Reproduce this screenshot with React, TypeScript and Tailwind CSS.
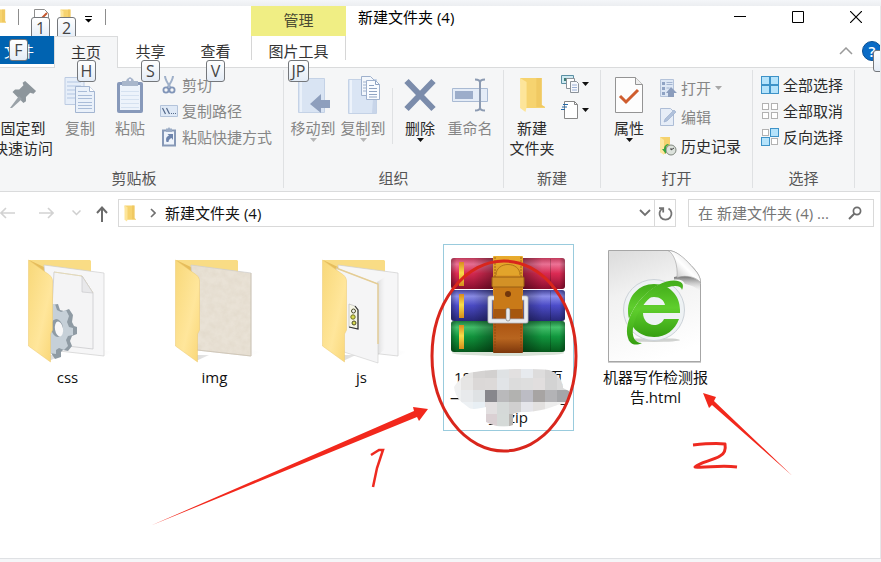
import type { ReactNode } from "react";

const FONT = "font-['Open_Sans','Noto_Sans_CJK_SC',sans-serif]";

function KeyTip({ children, className }: { children: ReactNode; className: string }) {
  return (
    <span
      className={`absolute z-10 flex h-[22px] items-center justify-center rounded-[3px] border border-[#74777b] bg-linear-to-b from-white to-[#e4ecf6] text-[16px] leading-5 text-[#444] ${className}`}
    >
      {children}
    </span>
  );
}

function Caret({ color = "#111" }: { color?: string }) {
  return (
    <svg width="7" height="4" viewBox="0 0 7 4">
      <path d="M0 0h7L3.500 4z" fill={color} />
    </svg>
  );
}

/* ---------- small drawings ---------- */

function MiniFolder({ w = 14, h = 18 }: { w?: number; h?: number }) {
  return (
    <svg width={w} height={h} viewBox="0 0 24 36" preserveAspectRatio="none">
      <path d="M1 1h20v27l3 2v1H5z" fill="#f6d36f" />
      <path d="M16 1h5v27l3 2h-8z" fill="#edc35a" opacity=".6" />
      <path d="M1 1l6 4v25l-1 5-5-4z" fill="#fde59a" />
    </svg>
  );
}

function PinIcon() {
  return (
    <svg width="36" height="36" viewBox="0 0 36 36">
      <path d="M18 6l13 12-3 3-4-1-5 5 0 5-3 2-13-13 3-3 5 0 5-5-1-3z" transform="translate(5 -1) scale(.84)" fill="#8d969c" />
      <path d="M14 19l3 3L7 31l-2 0z" fill="#9aa2a8" />
    </svg>
  );
}

function CopyIcon() {
  return (
    <svg width="32" height="36" viewBox="0 0 32 36">
      <path d="M1 .5h19v27H1z" fill="#e6eef9" stroke="#bccbe2" />
      <path d="M3 5h14M3 9h14M3 13h8M3 17h8M3 21h8" stroke="#b3c6e2" />
      <path d="M11.500 9.500h14l5 5v21h-19z" fill="#eaf1fa" stroke="#a3b5d1" />
      <path d="M25.500 9.500v5h5" fill="#fff" stroke="#a3b5d1" />
      <path d="M14 14.500h9M14 18.500h14M14 21.500h14M14 25.500h14M14 28.500h14M14 31.500h14" stroke="#a9bcd8" />
    </svg>
  );
}

function PasteIcon() {
  return (
    <svg width="28" height="37" viewBox="0 0 28 37">
      <rect x="1" y="5" width="26" height="31" rx="2" fill="#8799ba" />
      <path d="M4 8h20v25H4z" fill="#edf3fb" />
      <path d="M5 14.500h18M5 18.500h18M5 22.500h18M5 26.500h18M5 30.500h18" stroke="#d5e1f0" />
      <path d="M6 4h4l1-2 3-2 3 2 1 2h4v5H6z" fill="#a8b6cb" />
      <path d="M13 2h2v2h-2z" fill="#eef" />
    </svg>
  );
}

function MoveIcon() {
  return (
    <svg width="36" height="36" viewBox="0 0 36 36">
      <path d="M3.500 1.500h26v34h-26z" fill="#d9e4f3" stroke="#c4d2e6" />
      <path d="M6 2v33" stroke="#eaf1fa" strokeWidth="2" />
      <path d="M15 27l11-10v6h9v8h-9v5z" fill="#8e9fbd" />
    </svg>
  );
}

function CopyToIcon() {
  return (
    <svg width="36" height="38" viewBox="0 0 36 38">
      <path d="M3.500 3.500h28v34h-28z" fill="#dae5f4" stroke="#c4d2e6" />
      <path d="M6 4v33" stroke="#edf3fb" strokeWidth="2" />
      <path d="M28 23h3v14h-4z" fill="#c8d5e9" />
      <path d="M16.500.5h9l4 4v15h-13z" fill="#f3f7fc" stroke="#9fb1cd" />
      <path d="M18 6h5M18 9h4M18 12h4M18 15h4" stroke="#9fb1cd" />
      <path d="M21.500 4.500h9l4 4v15h-13z" fill="#fafcff" stroke="#9fb1cd" />
      <path d="M30.500 4.500v4h4M24 9.500h5M24 12.500h8M24 15.500h8M24 18.500h8M24 21h8" stroke="#8fa3c2" fill="none" />
    </svg>
  );
}

function DeleteIcon() {
  return (
    <svg width="36" height="36" viewBox="0 0 36 36">
      <path d="M4.500 4l27 28M31.500 4l-27 28" stroke="#7b8cab" strokeWidth="6" />
    </svg>
  );
}

function RenameIcon() {
  return (
    <svg width="36" height="36" viewBox="0 0 36 36">
      <path d="M.5 11.500h35v13H.5z" fill="#e4ecf7" stroke="#a9bad3" />
      <path d="M3 14h18v8H3z" fill="#9cadca" />
      <path d="M23 2.500c3 0 5 1 5 3 0-2 2-3 5-3M28 5v26M23 33.500c3 0 5-1 5-3 0 2 2 3 5 3" fill="none" stroke="#8c9bb2" strokeWidth="2" />
    </svg>
  );
}

function PropertiesIcon() {
  return (
    <svg width="30" height="37" viewBox="0 0 30 37">
      <path d="M1.500.5h20l7 7v28h-27z" fill="#fdfdfd" stroke="#949494" />
      <path d="M21.500.5v7h7" fill="#eee" stroke="#949494" />
      <path d="M6 19l6 6L24 13" fill="none" stroke="#cf5d2e" strokeWidth="3" />
    </svg>
  );
}

function ScissorsIcon() {
  return (
    <svg width="18" height="20" viewBox="0 0 18 20">
      <path d="M5 1c0 4 3 8 6 12M13 1c0 4-3 8-6 12" fill="none" stroke="#9fb0c9" strokeWidth="2" />
      <circle cx="6" cy="15" r="2.600" fill="none" stroke="#8195b8" strokeWidth="1.800" />
      <circle cx="12" cy="15" r="2.600" fill="none" stroke="#8195b8" strokeWidth="1.800" />
    </svg>
  );
}

function PathIcon() {
  return (
    <svg width="18" height="20" viewBox="0 0 18 20">
      <path d="M.5 4.500h17v11H.5z" fill="#dfe9f6" stroke="#b3c3da" />
      <path d="M2.500 7l3 6M6.500 7l3 6" stroke="#566b8c" strokeWidth="1.200" />
      <path d="M11 12.500h1M13 12.500h1M15 12.500h1" stroke="#566b8c" />
    </svg>
  );
}

function ShortcutIcon() {
  return (
    <svg width="18" height="20" viewBox="0 0 18 20">
      <path d="M3 3.500h12v15H3z" fill="#eff4fb" stroke="#8799b7" strokeWidth="2" />
      <path d="M6 1.500h2L9 0l1 1.500h2V5H6z" fill="#9aabc5" />
      <path d="M6.500 15c-1-4 0-5.500 2.500-6.500L7.500 7H13v6l-1.500-2c-2 1-3 2-3 4z" fill="#6d84ac" />
    </svg>
  );
}

function OpenIcon() {
  return (
    <svg width="18" height="20" viewBox="0 0 18 20">
      <path d="M1.500 1.500h13v17h-13z" fill="#dde7f5" stroke="#b4c3da" />
      <path d="M3 4h3v3H3zM3 9h3v3H3zM3 14h3v3H3z" fill="#8fa3c4" />
      <path d="M7.500 4.500h6M7.500 6.500h6M7.500 10h3" stroke="#a3b4d0" />
      <path d="M12 9l6 6h-3v4H9v-4H7z" fill="#8b9dbd" />
    </svg>
  );
}

function EditIcon() {
  return (
    <svg width="18" height="20" viewBox="0 0 18 20">
      <path d="M1.500 1.500h10l3 3v14h-13z" fill="#e6edf7" stroke="#adbdd6" />
      <path d="M5 15l1-3L15 3l2 2-9 9z" fill="#b0c1db" stroke="#95a9c9" strokeWidth=".6" />
    </svg>
  );
}

function HistoryIcon() {
  return (
    <svg width="18" height="20" viewBox="0 0 18 20">
      <path d="M1 1h10v15l-6 2-4-2z" fill="#f5d26e" />
      <path d="M1 1l4 3v15l-4-3z" fill="#fde79f" />
      <circle cx="12" cy="14" r="5" fill="#dce2dc" stroke="#80877f" />
      <path d="M12 14l3-2M12 14v-2" stroke="#444" />
      <path d="M10 8c-3 0-5 2-5 5H3l4 5V11c1-1 2-2 3-3z" fill="#39a443" />
    </svg>
  );
}

function SelectIcon({ kind }: { kind: "all" | "none" | "invert" }) {
  const squares = [
    [kind === "all", 0, 0],
    [kind !== "none", 9, 0],
    [kind !== "none", 0, 9],
    [kind === "all", 9, 9],
  ] as const;
  return (
    <svg width="18" height="20" viewBox="0 -1 18 20">
      {squares.map(([active, x, y], i) =>
        active ? (
          <rect key={i} x={x + 0.5} y={y + 0.5} width="8" height="8" fill="#b5e3fb" stroke="#3e93c8" />
        ) : (
          <rect key={i} x={x + 1.5} y={y + 1.5} width="6" height="6" fill="#fff" stroke="#b2b2b2" />
        ),
      )}
    </svg>
  );
}

function NewItemIcon() {
  return (
    <svg width="19" height="20" viewBox="0 0 19 20">
      <path d="M.5 1.500h12v8H.5z" fill="#cfeaf2" stroke="#5a8fa3" />
      <path d="M3 4h4v3H3z" fill="#3d7c74" />
      <path d="M5.500 4.500h8v10h-8z" fill="#fff" stroke="#8b9299" />
      <path d="M9.500 7.500h6l2 2v9h-8z" fill="#f7f9fd" stroke="#8b9299" />
      <path d="M11 11h5M11 13.500h5M11 16h5" stroke="#9ab0d6" />
    </svg>
  );
}

function EasyAccessIcon() {
  return (
    <svg width="19" height="20" viewBox="0 0 19 20">
      <path d="M3.500 1.500h10l3 3v14h-13z" fill="#fff" stroke="#868686" />
      <path d="M13.500 1.500v3h3" fill="none" stroke="#868686" />
      <path d="M2 4.500h5M1 7h5M0 9.500h4" stroke="#2569a8" />
    </svg>
  );
}

/* ---------- ribbon ---------- */

function Group({
  label,
  className,
  inset = "pl-1",
  children,
}: {
  label: string;
  className: string;
  inset?: string;
  children: ReactNode;
}) {
  return (
    <section
      aria-label={label}
      className={`relative flex h-[118px] shrink-0 flex-col justify-between border-r border-[#dfe1e3] ${className}`}
    >
      <div className={`flex items-start ${inset}`}>{children}</div>
      <div className="text-center leading-5 text-[#555]">{label}</div>
    </section>
  );
}

function BigButton({
  icon,
  lines,
  className = "w-[50px]",
  muted,
  caret,
}: {
  icon: ReactNode;
  lines: string[];
  className?: string;
  muted?: boolean;
  caret?: boolean;
}) {
  return (
    <button type="button" className={`flex shrink-0 flex-col items-center ${muted ? "text-[#868686]" : "text-[#2b2b2b]"} ${className}`}>
      <span className="flex h-12 items-center justify-center pt-0.5">{icon}</span>
      {lines.map((line) => (
        <span key={line} className="leading-5 whitespace-nowrap">
          {line}
        </span>
      ))}
      {caret && <Caret color={muted ? "#b5b5b5" : "#111"} />}
    </button>
  );
}

function SmallButton({ icon, label, muted, caret }: { icon: ReactNode; label: string; muted?: boolean; caret?: boolean }) {
  return (
    <button type="button" className={`flex items-center gap-1 leading-5 whitespace-nowrap ${muted ? "text-[#868686]" : "text-[#2b2b2b]"}`}>
      {icon}
      <span>{label}</span>
      {caret && <Caret color="#a8a8a8" />}
    </button>
  );
}

function Ribbon() {
  return (
    <div className="flex h-[125px] overflow-hidden border-y border-[#dadbdc] bg-[#f5f6f7] pt-0.5">
      <Group label="剪贴板" className="-ml-[15px] w-[299px]" inset="pl-2">
        <BigButton icon={<PinIcon />} lines={["固定到", "快速访问"]} className="w-[60px]" />
        <div className="w-0.5" />
        <BigButton icon={<CopyIcon />} lines={["复制"]} muted />
        <BigButton icon={<PasteIcon />} lines={["粘贴"]} muted />
        <div className="flex flex-col gap-1.5 pt-[5px] pl-[5px]">
          <SmallButton icon={<ScissorsIcon />} label="剪切" muted />
          <SmallButton icon={<PathIcon />} label="复制路径" muted />
          <SmallButton icon={<ShortcutIcon />} label="粘贴快捷方式" muted />
        </div>
      </Group>
      <Group label="组织" className="w-[220px]">
        <BigButton icon={<MoveIcon />} lines={["移动到"]} muted caret />
        <BigButton icon={<CopyToIcon />} lines={["复制到"]} muted caret />
        <div className="mt-[18px] mr-0.5 ml-1 h-14 w-px bg-[#dfe1e3]" />
        <BigButton icon={<DeleteIcon />} lines={["删除"]} caret />
        <BigButton icon={<RenameIcon />} lines={["重命名"]} muted />
      </Group>
      <Group label="新建" className="w-[97px]" inset="pl-[3px]">
        <BigButton icon={<MiniFolder w={26} h={36} />} lines={["新建", "文件夹"]} />
        <div className="flex flex-col gap-1.5 pt-1 pl-1">
          <button type="button" aria-label="新建项目" className="flex items-center gap-0.5">
            <NewItemIcon />
            <Caret />
          </button>
          <button type="button" aria-label="轻松访问" className="flex items-center gap-0.5">
            <EasyAccessIcon />
            <Caret />
          </button>
        </div>
      </Group>
      <Group label="打开" className="w-[152px]" inset="pl-[3px]">
        <BigButton icon={<PropertiesIcon />} lines={["属性"]} caret />
        <div className="flex flex-col gap-[9px] pt-2 pl-[5px]">
          <SmallButton icon={<OpenIcon />} label="打开" muted caret />
          <SmallButton icon={<EditIcon />} label="编辑" muted />
          <SmallButton icon={<HistoryIcon />} label="历史记录" />
        </div>
      </Group>
      <Group label="选择" className="w-[102px]" inset="pl-2">
        <div className="flex flex-col gap-1.5 pt-[5px]">
          <SmallButton icon={<SelectIcon kind="all" />} label="全部选择" />
          <SmallButton icon={<SelectIcon kind="none" />} label="全部取消" />
          <SmallButton icon={<SelectIcon kind="invert" />} label="反向选择" />
        </div>
      </Group>
    </div>
  );
}

/* ---------- header ---------- */

function TitleBar() {
  return (
    <header className="flex h-[30px] items-start bg-white text-black">
      <div className="flex h-[30px] w-[251px] shrink-0 items-start pt-[3px]">
        <div className="-ml-2 w-[14px] overflow-hidden">
          <MiniFolder w={15} h={16} />
        </div>
        <div className="ml-3 h-4 w-px bg-[#8d8d8d]" />
        <button type="button" aria-label="属性" className="relative ml-[15px] h-4 w-[15px]">
          <svg width="15" height="16" viewBox="0 0 15 16">
            <path d="M.5.5h10l4 4v11H.5z" fill="#fff" stroke="#8f8f8f" />
            <path d="M8 9l5-5" stroke="#c4572d" strokeWidth="2" />
          </svg>
          <KeyTip className="top-2 -left-[3px] w-[19px]">1</KeyTip>
        </button>
        <button type="button" aria-label="新建文件夹" className="relative ml-[11px] h-4 w-3">
          <MiniFolder w={12} h={16} />
          <KeyTip className="top-2 -left-[3px] w-[19px]">2</KeyTip>
        </button>
        <button type="button" aria-label="自定义快速访问工具栏" className="mt-[7px] ml-[13px]">
          <svg width="7" height="7" viewBox="0 0 7 7">
            <path d="M0 0h7v1H0zM0 3h7L3.500 6.500z" fill="#000" />
          </svg>
        </button>
        <div className="ml-[13px] h-4 w-px bg-[#8d8d8d]" />
      </div>
      <div className="h-[30px] w-[95px] shrink-0 bg-[#f0ee84] text-center leading-[29px] text-[#4a4a32]">管理</div>
      <h1 className="ml-3 flex-1 leading-[22px]">新建文件夹 (4)</h1>
      <div className="flex shrink-0 items-center gap-[46px] pt-[5px] pr-[18px]">
        <button type="button" aria-label="最小化">
          <svg width="12" height="12" viewBox="0 0 12 12">
            <path d="M0 5.500h12" stroke="#000" />
          </svg>
        </button>
        <button type="button" aria-label="最大化">
          <svg width="12" height="12" viewBox="0 0 12 12">
            <path d="M.5.5h11v11H.5z" fill="none" stroke="#000" />
          </svg>
        </button>
        <button type="button" aria-label="关闭">
          <svg width="12" height="12" viewBox="0 0 12 12">
            <path d="M0 0l12 12M12 0L0 12" stroke="#000" strokeWidth="1.200" />
          </svg>
        </button>
      </div>
    </header>
  );
}

function Tabs() {
  return (
    <nav className="relative z-10 -mb-px flex h-8 items-start text-[#333]">
      <button type="button" className="relative h-7 w-[54px] bg-[#0063b1] pl-1 text-left leading-[30px] text-white">
        文件
        <KeyTip className="top-[3px] left-[9px] w-[19px]">F</KeyTip>
      </button>
      <button type="button" className="relative h-8 w-16 border-x border-t border-[#dadbdc] bg-[#f5f6f7] leading-7">
        <span className="block h-[30px]">主页</span>
        <KeyTip className="top-[23px] left-[22px] w-[19px]">H</KeyTip>
      </button>
      <button type="button" className="relative h-7 w-[65px] leading-[30px]">
        共享
        <KeyTip className="top-6 left-[23px] w-[19px]">S</KeyTip>
      </button>
      <button type="button" className="relative h-7 w-[65px] leading-[30px]">
        查看
        <KeyTip className="top-6 left-[23px] w-[19px]">V</KeyTip>
      </button>
      <button type="button" className="relative ml-[3px] h-6 w-[95px] border-x border-[#d6d6d6] leading-[30px]">
        图片工具
        <KeyTip className="top-6 left-9 w-[21px]">JP</KeyTip>
      </button>
      <div className="flex flex-1 justify-end overflow-x-clip pt-[5px]">
        <button type="button" aria-label="最小化功能区" className="mt-1.5 mr-[9px] h-2">
          <svg width="14" height="8" viewBox="0 0 14 8">
            <path d="M1 7l6-6 6 6" fill="none" stroke="#9a9a9a" strokeWidth="1.500" />
          </svg>
        </button>
        <button
          type="button"
          className="relative -mr-0.5 h-5 w-5 rounded-full border border-[#0a4f93] bg-[#0a6bc6] text-center leading-[18px] font-semibold text-white"
        >
          ?
          <KeyTip className="top-2 left-[10px] w-[19px]">{""}</KeyTip>
        </button>
      </div>
    </nav>
  );
}

function AddressBar() {
  return (
    <div className="flex h-[28px] items-stretch pr-[6px]">
      <div className="flex w-[118px] shrink-0 items-center">
        <button type="button" aria-label="后退">
          <svg width="15" height="12" viewBox="0 0 15 12">
            <path d="M1 6h14M6 1L1 6l5 5" fill="none" stroke="#d2d2d2" strokeWidth="1.600" />
          </svg>
        </button>
        <button type="button" aria-label="前进" className="ml-6">
          <svg width="15" height="12" viewBox="0 0 15 12">
            <path d="M0 6h14M9 1l5 5-5 5" fill="none" stroke="#d2d2d2" strokeWidth="1.600" />
          </svg>
        </button>
        <button type="button" aria-label="最近浏览的位置" className="ml-[18px]">
          <svg width="9" height="6" viewBox="0 0 9 6">
            <path d="M.5.5l4 4 4-4" fill="none" stroke="#cfcfcf" strokeWidth="1.500" />
          </svg>
        </button>
        <button type="button" aria-label="上移" className="ml-[15px] pt-0.5">
          <svg width="12" height="16" viewBox="0 0 12 16">
            <path d="M6 16V1.500M1 7l5-5.500L11 7" fill="none" stroke="#6b6b6b" strokeWidth="2" />
          </svg>
        </button>
      </div>
      <div className="flex flex-1 items-center border border-[#d9d9d9] pl-[5px] text-[#111]">
        <MiniFolder w={12} h={17} />
        <svg className="ml-[14px]" width="6" height="10" viewBox="0 0 6 10">
          <path d="M1 1l4 4-4 4" fill="none" stroke="#6f6f6f" strokeWidth="1.600" />
        </svg>
        <span className="ml-[9px] flex-1 leading-[26px]">新建文件夹 (4)</span>
        <button type="button" aria-label="历史位置" className="mr-[3px]">
          <svg width="12" height="8" viewBox="0 0 12 8">
            <path d="M1 1l5 5 5-5" fill="none" stroke="#707070" strokeWidth="1.800" />
          </svg>
        </button>
        <button type="button" aria-label="刷新" className="flex h-full w-[21px] items-center justify-center border-l border-[#d9d9d9]">
          <svg width="15" height="15" viewBox="0 0 15 15">
            <path d="M4.500 2.500A6 6 0 1 0 10.500 2.500M1 2.200h4.200V6.400" fill="none" stroke="#747474" strokeWidth="1.800" />
          </svg>
        </button>
      </div>
      <form className="ml-3 flex w-[186px] shrink-0 items-center border border-[#d9d9d9] pl-[9px]">
        <input
          aria-label="搜索"
          type="text"
          placeholder="在 新建文件夹 (4) ..."
          className="w-[140px] bg-transparent leading-5 outline-none placeholder:text-[#757575]"
        />
        <button type="button" aria-label="开始搜索" className="ml-[10px]">
          <svg width="14" height="14" viewBox="0 0 14 14">
            <circle cx="9" cy="5" r="3.600" fill="none" stroke="#6d6d6d" strokeWidth="1.700" />
            <path d="M6.500 7.500L1 13" stroke="#6d6d6d" strokeWidth="2" />
          </svg>
        </button>
      </form>
    </div>
  );
}

/* ---------- files ---------- */

function Canvas({ children }: { children: ReactNode }) {
  return (
    <svg className="block" width="129" height="122" viewBox="1 1 129 122">
      {children}
    </svg>
  );
}

function FolderDrawing({ id, children, paper = "#f6f6f7" }: { id: string; children?: ReactNode; paper?: string }) {
  return (
    <Canvas>
      <defs>
        <linearGradient id={`${id}-flap`} x1="0" y1="0" x2="1" y2="1">
          <stop offset="0" stopColor="#f8d879" />
          <stop offset=".6" stopColor="#ffe69b" />
          <stop offset="1" stopColor="#f9d676" />
        </linearGradient>
        <linearGradient id={`${id}-shade`} x1="0" y1="0" x2="1" y2="0">
          <stop offset="0" stopColor="#b9b9b9" stopOpacity=".5" />
          <stop offset="1" stopColor="#ddd" stopOpacity="0" />
        </linearGradient>
      </defs>
      <path d="M47 117l13-6H47zM101 112l11-4-10-2z" fill={`url(#${id}-shade)`} />
      <path d="M27 16h61l1 1v50H41z" fill="#f9dc85" />
      <path d="M27 16l17 8v10z" fill="#e6bd5b" />
      <path d="M42 21l60 8v83l-54-6z" fill={paper} stroke="#cfcfcf" strokeWidth=".7" />
      {children}
      <path d="M26.500 16l21 15c2 2 3 4 3 6v49l-2 4v28l-22-16z" fill={`url(#${id}-flap)`} stroke="#ecc96e" strokeWidth=".5" />
    </Canvas>
  );
}

function CssFolder() {
  return (
    <FolderDrawing id="css">
      <path d="M52 28l28 4 11 17v56l-43-5z" fill="#f4f4f5" stroke="#cacacd" strokeWidth=".8" />
      <path d="M52 28l28 4 11 17" fill="none" stroke="#eadcae" strokeWidth=".8" />
      <path d="M80 32v16l11 1z" fill="#e8e8ea" stroke="#c4c4c7" strokeWidth=".6" />
      <g>
        <path
          d="M49 61l7-1 2 6 4 1 5-2 4 6-1 7 2 4 3 1v7l-5 2-2 5 2 5-4 5-5-1-2 2v5l-6 2-4-6z"
          fill="#8f9ba4"
        />
        <path
          d="M47 60l6 0 2 6 4 2 5-2 3 6-2 6 2 5 4 1v7l-5 1-2 4 2 6-4 4-5-2-3 2v4l-7-1z"
          fill="#c6d0d8"
        />
        <ellipse cx="55" cy="84" rx="6" ry="9" fill="#8f9ba4" transform="rotate(-10 55 84)" />
        <ellipse cx="57" cy="85" rx="4" ry="7.500" fill="#f7f7f8" transform="rotate(-10 57 85)" />
      </g>
    </FolderDrawing>
  );
}

function ImgFolder() {
  return (
    <FolderDrawing id="img" paper="#e9e2d6">
      <defs>
        <filter id="img-grain" x="0" y="0" width="1" height="1">
          <feTurbulence type="fractalNoise" baseFrequency=".15" numOctaves="4" />
          <feColorMatrix values="0 0 0 0 .6  0 0 0 0 .52  0 0 0 0 .4  .35 0 0 0 -.1" />
          <feComposite in2="SourceGraphic" operator="in" />
        </filter>
      </defs>
      <path d="M42 21l60 8v83l-54-6z" fill="#000" filter="url(#img-grain)" />
      <path d="M102 29v83l-54-6" fill="none" stroke="#cfc4b1" strokeWidth=".8" />
    </FolderDrawing>
  );
}

function JsFolder() {
  return (
    <FolderDrawing id="js">
      <path d="M81 38l8-5v72l-8 7z" fill="url(#js-shade)" />
      <path d="M40 24l42 16v79l-34-11z" fill="#f5f5f6" stroke="#cccccc" strokeWidth=".6" />
      <path d="M40 24l42 16v60" fill="none" stroke="#e5cd94" strokeWidth="1.400" />
      <path d="M53 60l6 2 3 4v19l-9-2z" fill="#f6f6e8" stroke="#bbb" strokeWidth=".7" />
      <path d="M59 62l3 4v19l-9-2" fill="none" stroke="#333" strokeWidth="1.200" />
      <circle cx="57.500" cy="67" r="2" fill="#eee" stroke="#4b4b29" />
      <circle cx="57" cy="73" r="2.200" fill="#d9dc4c" stroke="#6d6d29" />
      <circle cx="58" cy="79" r="2" fill="#d9dc4c" stroke="#4b4b29" />
    </FolderDrawing>
  );
}

function RarDrawing() {
  const books = [
    { y: 14, id: "rar-red", stops: ["#c23a5c", "#ee7397", "#dc2b54", "#8f0f30"] },
    { y: 46, id: "rar-blue", stops: ["#45459e", "#8f91ee", "#4d4dcb", "#28287a"] },
    { y: 77, id: "rar-green", stops: ["#1b7a3b", "#45c46d", "#12993f", "#055a1c"] },
  ];
  return (
    <Canvas>
      <defs>
        {books.map((b) => (
          <linearGradient key={b.id} id={b.id} x1="0" y1="0" x2="0" y2="1">
            <stop offset="0" stopColor={b.stops[0]} />
            <stop offset=".2" stopColor={b.stops[1]} />
            <stop offset=".5" stopColor={b.stops[2]} />
            <stop offset="1" stopColor={b.stops[3]} />
          </linearGradient>
        ))}
        <linearGradient id="rar-side" x1="0" y1="0" x2="1" y2="0">
          <stop offset="0" stopColor="#000" stopOpacity=".3" />
          <stop offset=".05" stopColor="#000" stopOpacity="0" />
          <stop offset=".2" stopColor="#000" stopOpacity=".05" />
          <stop offset=".37" stopColor="#000" stopOpacity=".35" />
          <stop offset=".63" stopColor="#000" stopOpacity=".35" />
          <stop offset=".8" stopColor="#000" stopOpacity=".03" />
          <stop offset=".95" stopColor="#000" stopOpacity="0" />
          <stop offset="1" stopColor="#000" stopOpacity=".3" />
        </linearGradient>
        <linearGradient id="rar-strap" x1="0" y1="0" x2="0" y2="1">
          <stop offset="0" stopColor="#e9ac2d" />
          <stop offset=".35" stopColor="#d58b20" />
          <stop offset=".65" stopColor="#a9500f" />
          <stop offset=".85" stopColor="#b8651f" />
          <stop offset="1" stopColor="#7c360b" />
        </linearGradient>
        <linearGradient id="rar-gold" x1="0" y1="0" x2="0" y2="1">
          <stop offset="0" stopColor="#d98a1e" />
          <stop offset=".45" stopColor="#f7dc49" />
          <stop offset="1" stopColor="#d58d1b" />
        </linearGradient>
      </defs>
      <ellipse cx="65" cy="109" rx="56" ry="3" fill="#d9e2d7" />
      {books.map((b) => (
        <g key={b.id}>
          <rect x="8" y={b.y} width="114" height="31" rx="3" fill={`url(#${b.id})`} />
          <rect x="8" y={b.y} width="114" height="31" rx="3" fill="url(#rar-side)" />
          <path d={`M107.500 ${b.y + 1}v29`} stroke="#000" strokeOpacity=".2" />
          <rect x="16" y={b.y + 4} width="5" height="24" fill="url(#rar-gold)" />
        </g>
      ))}
      <rect x="50" y="12" width="30" height="97" rx="1" fill="url(#rar-strap)" />
      <path d="M52 13v94M78 13v94" stroke="#7a4109" strokeOpacity=".6" strokeDasharray="2 1" />
      <path d="M53 31c0-14 24-14 24 0" fill="#e2a42b" stroke="#a36a14" strokeWidth=".8" />
      <path d="M47 54h36v23H47z" fill="none" stroke="#a1a3aa" strokeWidth="5" strokeLinejoin="round" />
      <path d="M47 54h36v23H47z" fill="none" stroke="#e9eaee" strokeWidth="3.500" strokeLinejoin="round" />
      <rect x="51" y="43" width="28" height="30" fill="#c97a18" />
      <path d="M51 65h28v8H51z" fill="#a5560f" />
      <rect x="49" y="33" width="32" height="10" rx="1" fill="#d39126" stroke="#985d12" />
      <circle cx="65" cy="50" r="3" fill="#71360c" />
      <rect x="63" y="64" width="4" height="13" rx="2" fill="#e9eaee" stroke="#777" strokeWidth=".6" />
    </Canvas>
  );
}

function HtmlDrawing() {
  return (
    <Canvas>
      <defs>
        <linearGradient id="html-page" x1=".2" y1="0" x2=".5" y2="1">
          <stop offset="0" stopColor="#dedede" />
          <stop offset=".35" stopColor="#f1f1f1" />
          <stop offset="1" stopColor="#fff" />
        </linearGradient>
        <linearGradient id="html-fold" x1="0" y1="1" x2="1" y2="0">
          <stop offset="0" stopColor="#a8a8a8" />
          <stop offset=".5" stopColor="#fff" />
          <stop offset="1" stopColor="#ccc" />
        </linearGradient>
        <linearGradient id="html-under" x1="0" y1="0" x2="0" y2="1">
          <stop offset="0" stopColor="#6f6f6f" />
          <stop offset="1" stopColor="#dcdcdc" stopOpacity="0" />
        </linearGradient>
        <linearGradient id="html-green" x1="0" y1="0" x2="0" y2="1">
          <stop offset="0" stopColor="#43ad1a" />
          <stop offset=".45" stopColor="#5fce2d" />
          <stop offset="1" stopColor="#359f11" />
        </linearGradient>
      </defs>
      <path d="M18 7h59c9 0 16 6 24 15 6 7 10 12 10 18v78H18z" fill="#bcbcbc" transform="translate(0 .8)" />
      <path d="M18.500 6.500H78c8 0 15 7 23 15 6 6 9.500 11 9.500 18v78h-92z" fill="url(#html-page)" stroke="#a6a6a6" />
      <path d="M84 33c9-2 20-1 26 5v9c-5-5-14-8-26-8z" fill="url(#html-under)" />
      <path d="M78 6.500c6 3 10 14 9 27 10-3 20 0 23.500 5 0-6-3-10-9.500-17-7-8-15-15-23-15z" fill="url(#html-fold)" stroke="#a0a0a0" strokeWidth=".6" />
      <ellipse cx="64" cy="96" rx="26" ry="2" fill="#d0d2d0" />
      <circle cx="64" cy="66" r="30.500" fill="#eef2f4" stroke="#ccd2d8" />
      <path
        fillRule="evenodd"
        d="M64 40c15 0 26 11 26 26v3H53c0 7 5 12 11 12 4 0 8-2 10-6h15c-4 11-13 18-25 18-15 0-26-11-26-26s11-27 26-27zm0 13c-6 0-10 3-11 8h22c-1-5-5-8-11-8z"
        fill="url(#html-green)"
      />
      <path d="M93 41c-1-5-12-5-24 2C55 51 43 65 38 84" stroke="#f4f7f4" strokeWidth="4" fill="none" />
      <path d="M92 46c5-10-9-13-24-5C48 52 33 77 38 94c2 7 8 8 14 5-8 0-10-7-9-15 2-14 13-30 27-37 10-6 21-7 22-1z" fill="url(#html-green)" />
    </Canvas>
  );
}

function FileTile({ drawing, children, selected }: { drawing: ReactNode; children: ReactNode; selected?: boolean }) {
  return (
    <li
      className={`w-[131px] shrink-0 border pb-[3px] text-center leading-5 text-[#111] ${
        selected ? "border-[#99cbdd]" : "border-transparent"
      }`}
    >
      {drawing}
      {children}
    </li>
  );
}

/* Pixelated patch that hides the middle of the archive's name. */
function Mosaic() {
  const rows = [
    ["#f1f1f1", "#e4e3e2", "#d5d3d2", "#d2d0cf", "#dfe2e4", "#e2e0e0", "#e7eaee", "#dddcdc", "#d3d2d2", "#e5e5e5"],
    ["#f0f0f0", "#e6e5e4", "#dbd8d7", "#dcd9d8", "#e1e4e7", "#dcdcdc", "#dedede", "#e1dede", "#d3d3d3", "#dadada"],
    ["#eef0f1", "#e8eaec", "#dfe2e4", "#87878c", "#b9b9bb", "#b2b2b0", "#bcbcc4", "#a7a4a3", "#b3b3b6", "#a5a6a9"],
    ["#f6f8fa", "#edf1f4", "#e8eff4", "#e2dfe0", "#d5d9d8", "#d0cfcf", "#e5e5ea", "#e2e0df", "#ededed", "#f0f0f0"],
    ["#fff", "#fff", "#fff", "#dad0d3", "#d5dad8", "#b9b5b1", "#e3e3e3", "#fff", "#fff", "#fff"],
  ];
  return (
    <svg className="absolute top-0 left-2 h-[60px] w-[120px]" viewBox="452 367 120 60">
      <clipPath id="mosaic-shape">
        <path d="M454 387c4-6 8-10 15-14 16-4 60-5 80-3 8 3 12 8 14 16v2l6 3v11c-8 2-12 3-17 5-8 3-16 4-24 5-7 0-11 0-15 2v11c-7 3-18 2-27-3v-15c-8 2-16 3-18 0-6-5-12-7-14-20z" />
      </clipPath>
      <g clipPath="url(#mosaic-shape)">
        {rows.map((row, r) =>
          row.map((fill, c) => <rect key={`${r}-${c}`} x={449 + c * 12} y={366 + r * 12} width="12.500" height="12.500" fill={fill} />),
        )}
      </g>
    </svg>
  );
}

/* Red pen marks drawn over the window. */
function PenMarks() {
  return (
    <svg className="pointer-events-none absolute top-0 left-0 z-20" width="881" height="562" viewBox="0 0 881 562">
      <ellipse cx="504" cy="356" rx="72" ry="95" fill="none" stroke="#d9261c" strokeWidth="3" />
      <path d="M151 525.500L414 411l-1-4 15 2-9 12-2-4z" fill="#f2281c" />
      <path d="M792.500 476L712 405l-3 3-6-15 13 4-2 4z" fill="#f2281c" />
      <path d="M371 455l8-5 4 0-6 18-4 19" fill="none" stroke="#ee2a20" strokeWidth="2.500" />
      <path d="M693 445c10-1 22-2 32-1 1 6-1 10-5 12-8 5-20 6-25 11 12 1 24-2 42 0" fill="none" stroke="#ee2a20" strokeWidth="3" strokeLinejoin="round" />
    </svg>
  );
}

export default function App() {
  return (
    <div className={`relative flex min-h-screen flex-col overflow-hidden bg-white text-[15px] ${FONT}`}>
      <div className="h-1.5 shrink-0 bg-linear-to-b from-[#f4f6f9] to-[#eceef1]" />
      <div className="flex flex-1 flex-col border-r border-[#e6e7e9]">
        <TitleBar />
        <Tabs />
        <Ribbon />
        <main className="flex-1 pt-[7px]">
          <AddressBar />
          <ul className="mt-[17px] flex gap-4 pl-0.5">
            <FileTile drawing={<CssFolder />}>css</FileTile>
            <FileTile drawing={<ImgFolder />}>img</FileTile>
            <FileTile drawing={<JsFolder />}>js</FileTile>
            <FileTile drawing={<RarDrawing />} selected>
              <div className="relative">
                <div className="flex justify-between px-[10px]">
                  <span>18</span>
                  <span>页</span>
                </div>
                <div className="flex justify-between px-[6px]">
                  <span>—–</span>
                  <span>_</span>
                </div>
                <div>_2.zip</div>
                <Mosaic />
              </div>
            </FileTile>
            <FileTile drawing={<HtmlDrawing />}>
              机器写作检测报
              <br />
              告.html
            </FileTile>
          </ul>
        </main>
      </div>
      <div className="h-1 shrink-0 border-t border-[#dfe1e4] bg-[#f5f6f8]" />
      <PenMarks />
    </div>
  );
}
